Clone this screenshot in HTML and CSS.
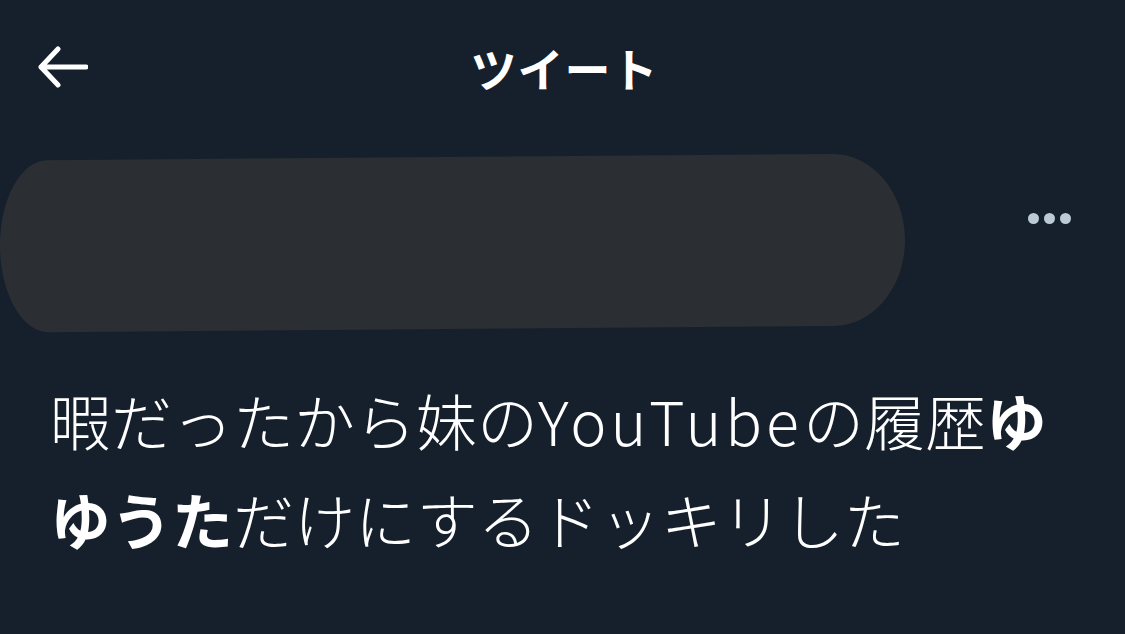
FILE: index.html
```html
<!DOCTYPE html>
<html lang="ja">
<head>
  <meta charset="UTF-8">
  <meta name="viewport" content="width=device-width, initial-scale=1.0">
  <title>ツイート</title>
  <link rel="stylesheet" href="styles.css">
</head>
<body>
  <header class="topbar">
    <button class="back" aria-label="戻る">
      <svg width="52" height="42" viewBox="0 0 52 42">
        <path d="M50 21H5M22 3L5 21l17 18" fill="none" stroke="#fff" stroke-width="5" stroke-linecap="round" stroke-linejoin="round"/>
      </svg>
    </button>
    <h1>ツイート</h1>
  </header>

  <!-- author row, name hidden -->
  <div class="author">
    <div class="redacted"></div>
    <button class="more" aria-label="その他">
      <span></span><span></span><span></span>
    </button>
  </div>

  <p class="tweet">暇だったから妹の<span class="latin">YouTube</span>の履歴<b>ゆゆうた</b>だけにするドッキリした</p>
</body>
</html>
```

FILE: styles.css
```css
body {
  margin: 0;
  background-color: #16202c;
  color: #fff;
  font-family: "Noto Sans CJK JP", "Noto Sans", sans-serif;
  width: 1125px;
  height: 634px;
  overflow: hidden;
}
.topbar {
  position: relative;
  height: 134px;
  display: flex;
  align-items: center;
  justify-content: center;
}
.topbar h1 {
  margin: 0 0 0 4px;
  font-size: 46px;
  font-weight: 700;
  letter-spacing: 1px;
}
.back {
  position: absolute;
  left: 36px;
  top: 46px;
  padding: 0;
  border: none;
  background: none;
  display: flex;
}
.author {
  display: flex;
  align-items: center;
  justify-content: space-between;
  padding: 20px 54px 0 0;
  height: 178px;
}
.redacted {
  width: 905px;
  height: 172px;
  background-color: #2b2f34;
  border-radius: 48px 72px 72px 48px / 86px 86px 86px 86px;
  transform: rotate(-0.45deg);
}
.more {
  display: flex;
  gap: 5px;
  padding: 0;
  border: none;
  background: none;
  margin-bottom: 50px;
}
.more span {
  width: 11px;
  height: 11px;
  border-radius: 50%;
  background-color: #bccad6;
}
.tweet {
  margin: 38px 40px 0 50px;
  font-size: 61px;
  font-weight: 300;
  line-height: 99px;
}
.tweet .latin {
  letter-spacing: 4px;
}
.tweet b {
  font-weight: 700;
}
```
